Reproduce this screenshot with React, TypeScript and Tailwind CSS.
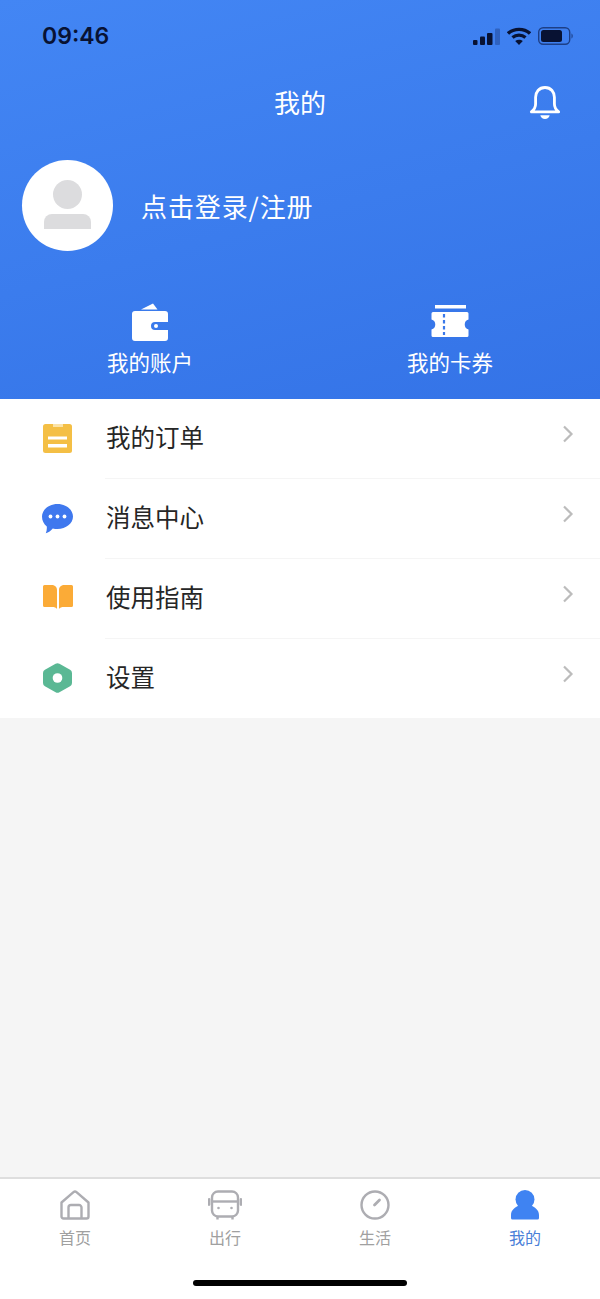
import React from "react";

const font = { fontFamily: '"Noto Sans CJK SC", "Noto Sans", sans-serif' };

function Chevron() {
  return (
    <svg width="12" height="18" viewBox="0 0 12 18" className="-mt-[10px] shrink-0">
      <path d="M2 1.5 L9.5 9 L2 16.5" fill="none" stroke="#bcbcbc" strokeWidth="2.2" />
    </svg>
  );
}

function OrderIcon() {
  return (
    <svg width="29" height="29" viewBox="0 0 29 29">
      <rect x="0" y="0" width="29" height="29" rx="2.5" fill="#f4bf45" />
      <rect x="10" y="0" width="10" height="3" fill="#fbe3a8" />
      <rect x="5" y="12.500" width="19" height="3" fill="#fff" />
      <rect x="5" y="20" width="19" height="3.500" fill="#fff" />
    </svg>
  );
}

function MessageIcon() {
  return (
    <svg width="31" height="30" viewBox="0 0 31 30">
      <path d="M15.5 0C24 0 31 5.6 31 12.6S24 25 15.5 25c-1.7 0-3.200-.2-4.700-.6C9 26.600 6.500 28.500 3.800 29.200c.8-2 1.200-4 1-6.600C1.800 20.200 0 16.600 0 12.600 0 5.600 7 0 15.500 0z" fill="#3f78ee" />
      <circle cx="8.500" cy="12.500" r="1.900" fill="#fff" />
      <circle cx="15.500" cy="12.500" r="1.900" fill="#fff" />
      <circle cx="22.500" cy="12.500" r="1.900" fill="#fff" />
    </svg>
  );
}

function BookIcon() {
  return (
    <svg width="30" height="24" viewBox="0 0 30 24" className="-mt-[3px]">
      <path d="M1.500 0h7C11.500 0 14 1.800 14 5v19c-1-1.500-2.500-2-5-2H1.500A1.500 1.500 0 0 1 0 20.500v-19A1.500 1.500 0 0 1 1.500 0z" fill="#fbab37" />
      <path d="M28.500 0h-7C18.500 0 16 1.800 16 5v19c1-1.500 2.500-2 5-2h7.500a1.500 1.500 0 0 0 1.500-1.500v-19A1.500 1.500 0 0 0 28.500 0z" fill="#fbab37" />
    </svg>
  );
}

function HexIcon() {
  return (
    <svg width="29" height="30" viewBox="0 0 30 31">
      <path d="M13 .8a4 4 0 0 1 4 0l11 6.200a4 4 0 0 1 2 3.400v10.200a4 4 0 0 1-2 3.400l-11 6.200a4 4 0 0 1-4 0L2 24a4 4 0 0 1-2-3.400V10.400A4 4 0 0 1 2 7z" fill="#5ab894" />
      <circle cx="15" cy="15.500" r="5" fill="#fff" />
    </svg>
  );
}

function Row({ icon, label, last }: { icon: React.ReactNode; label: string; last?: boolean }) {
  return (
    <div className={`flex ${last ? "h-[79px]" : "h-[80px]"}`}>
      <div className="flex w-[105px] shrink-0 items-center pl-[42px]">
        <div className="-mt-[1px] flex w-[31px] justify-center">{icon}</div>
      </div>
      <div className={`flex flex-1 items-center justify-between pl-[1px] pr-[26px] ${last ? "" : "border-b border-[#f5f5f5]"}`}>
        <span className="-mt-[2px] text-[24.5px] leading-none text-[#262626]">{label}</span>
        <Chevron />
      </div>
    </div>
  );
}

function Tab({ icon, label, active }: { icon: React.ReactNode; label: string; active?: boolean }) {
  return (
    <div className="flex flex-1 flex-col items-center">
      <div className="flex h-[32px] items-center justify-center">{icon}</div>
      <span className={`mt-[6px] text-[16px] leading-[20px] ${active ? "text-[#4a80d8]" : "text-[#a0a0a0]"}`}>{label}</span>
    </div>
  );
}

export default function App() {
  return (
    <div style={font} className="flex h-[1299px] w-[600px] flex-col overflow-hidden bg-[#f5f5f5]">
      <header className="h-[399px] shrink-0 bg-linear-165 from-[#4386f4] to-[#3473e7] px-[22px]">
        <div className="flex h-[72px] items-center justify-between pl-[20px] pr-[4px]">
          <span className="text-[23px] font-semibold leading-none text-[#081233]" style={{ fontFamily: '"Inter", sans-serif' }}>
            09:46
          </span>
          <div className="flex items-center gap-[7px]">
            <svg width="27" height="17" viewBox="0 0 27 17">
              <rect x="0" y="12" width="4.500" height="5" rx="1" fill="#081233" />
              <rect x="7" y="8.500" width="5" height="8.500" rx="1" fill="#081233" />
              <rect x="14" y="5" width="5.500" height="12" rx="1" fill="#081233" />
              <rect x="22" y="0.500" width="5" height="16.500" rx="1" fill="#2f62c0" />
            </svg>
            <svg width="24" height="18" viewBox="0 0 24 18">
              <path d="M1 6.500C7 1 17 1 23 6.500" fill="none" stroke="#081233" strokeWidth="3.400" />
              <path d="M5.500 10.500c3.700-3.300 9.300-3.300 13 0" fill="none" stroke="#081233" strokeWidth="3.200" />
              <path d="M12 18l-3.800-4c2.200-1.800 5.400-1.800 7.600 0z" fill="#081233" />
            </svg>
            <svg width="36" height="18" viewBox="0 0 36 18">
              <rect x="0.700" y="0.700" width="31" height="16.600" rx="4.500" fill="none" stroke="#1d3f86" strokeWidth="1.400" />
              <rect x="3" y="3" width="21" height="12" rx="2.500" fill="#081233" />
              <path d="M33.500 6.500c1.600.5 1.600 4.500 0 5z" fill="#1d3f86" />
            </svg>
          </div>
        </div>
        <div className="relative flex h-[64px] items-center justify-center">
          <span className="-mt-[4px] text-[26px] leading-none text-white">我的</span>
          <svg width="32" height="36" viewBox="0 0 34 38" className="absolute right-[17px] top-[13px]">
            <path d="M17 2.500c-6.500 0-10 5-10 10.500v7c0 3.500-1.500 6-4.500 8.500h29c-3-2.500-4.500-5-4.500-8.500v-7c0-5.500-3.500-10.500-10-10.500z" fill="none" stroke="#fff" strokeWidth="3" strokeLinejoin="round" />
            <path d="M12 32h10c-.5 2.500-2.500 4-5 4s-4.500-1.500-5-4z" fill="#fff" />
          </svg>
        </div>
        <div className="mt-[24px] flex items-center gap-[28px]">
          <div className="relative h-[91px] w-[91px] rounded-full bg-white">
            <div className="absolute left-[31px] top-[20px] h-[29px] w-[29px] rounded-full bg-[#dcdcde]" />
            <div className="absolute bottom-[22px] left-[22px] h-[15px] w-[47px] rounded-t-[8px] bg-[#dcdcde]" />
          </div>
          <span className="text-[26px] leading-none tracking-[0.9px] text-white">点击登录/注册</span>
        </div>
        <div className="-mx-[22px] mt-[52px] flex">
          <div className="flex flex-1 flex-col items-center">
            <svg width="38" height="38" viewBox="0 0 38 38">
              <path d="M10 6.500L22 .5l4.500 6z" fill="#fff" />
              <path d="M4 8h30a3 3 0 0 1 3 3v8H24a4 4 0 0 0 0 8h13v8a3 3 0 0 1-3 3H4a3 3 0 0 1-3-3V11a3 3 0 0 1 3-3z" fill="#fff" />
              <circle cx="25" cy="23" r="2" fill="#fff" />
            </svg>
            <span className="mt-[7px] text-[21.5px] leading-[28px] text-white">我的账户</span>
          </div>
          <div className="flex flex-1 flex-col items-center">
            <svg width="38" height="38" viewBox="0 0 38 38">
              <rect x="4" y="2" width="31" height="3.500" fill="#fff" />
              <path d="M2 9h34a1.500 1.500 0 0 1 1.500 1.500v6a5.200 5.200 0 0 0 0 10v6a1.500 1.500 0 0 1-1.500 1.500H2A1.500 1.500 0 0 1 .5 32.500v-6a5.200 5.200 0 0 0 0-10v-6A1.500 1.500 0 0 1 2 9z" fill="#fff" />
              <path d="M13 11v21" stroke="#3a79ea" strokeWidth="2.200" strokeDasharray="3.500 2.500" />
            </svg>
            <span className="mt-[7px] text-[21.5px] leading-[28px] text-white">我的卡券</span>
          </div>
        </div>
      </header>

      <section className="shrink-0 bg-white">
        <Row icon={<OrderIcon />} label="我的订单" />
        <Row icon={<MessageIcon />} label="消息中心" />
        <Row icon={<BookIcon />} label="使用指南" />
        <Row icon={<HexIcon />} label="设置" last />
      </section>

      <div className="flex-1" />

      <nav className="flex h-[122px] shrink-0 flex-col border-t-2 border-[#dedede] bg-white">
        <div className="flex pt-[10px]">
          <Tab
            label="首页"
            icon={
              <svg width="30" height="30" viewBox="0 0 30 30" fill="none" stroke="#adadb2" strokeWidth="2.400" strokeLinejoin="round">
                <path d="M13.500 2.200a2.300 2.300 0 0 1 3 0L28.500 12.500v14a2 2 0 0 1-2 2h-23a2 2 0 0 1-2-2v-14z" />
                <path d="M8.500 28.500V17.500a2.500 2.500 0 0 1 2.500-2.500h8a2.500 2.500 0 0 1 2.500 2.500v11" />
              </svg>
            }
          />
          <Tab
            label="出行"
            icon={
              <svg width="34" height="30" viewBox="0 0 34 30" fill="none" stroke="#adadb2" strokeWidth="2.400">
                <rect x="4" y="1.500" width="26" height="25" rx="6" />
                <path d="M4 11.500h26" />
                <path d="M1 9.500v5M33 9.500v5" strokeLinecap="round" strokeWidth="2.800" />
                <path d="M9.500 27v2.500M24.500 27v2.500" />
                <circle cx="10.500" cy="18" r="1.300" fill="#adadb2" stroke="none" />
                <circle cx="23.500" cy="18" r="1.300" fill="#adadb2" stroke="none" />
              </svg>
            }
          />
          <Tab
            label="生活"
            icon={
              <svg width="30" height="30" viewBox="0 0 30 30" fill="none" stroke="#adadb2">
                <circle cx="15" cy="15" r="13.500" strokeWidth="2.400" />
                <path d="M14.500 15L19.500 10" strokeWidth="2.800" strokeLinecap="round" />
              </svg>
            }
          />
          <Tab
            active
            label="我的"
            icon={
              <svg width="30" height="30" viewBox="0 0 30 30" fill="#3f83f2">
                <circle cx="15" cy="9.500" r="9.500" />
                <path d="M10 15h10C25 17 29 20 29 25v3a1.500 1.500 0 0 1-1.500 1.500h-25A1.500 1.500 0 0 1 1 28v-3c0-5 4-8 9-10z" />
              </svg>
            }
          />
        </div>
        <div className="mx-auto mt-[33px] h-[6px] w-[214px] rounded-full bg-black" />
      </nav>
    </div>
  );
}
